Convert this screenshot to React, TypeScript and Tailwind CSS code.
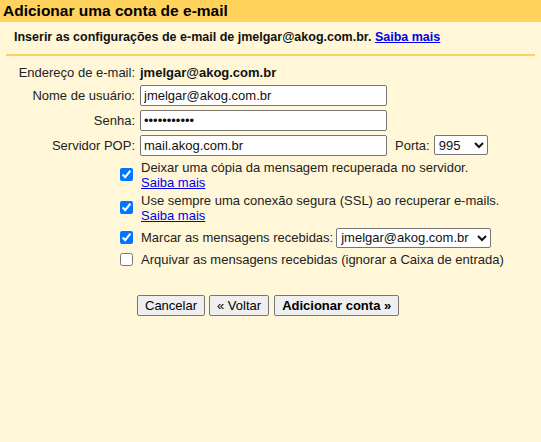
import React from "react";

const field =
  "h-[21px] w-[247px] rounded-[2px] border border-[#767676] bg-white px-[3px] text-[13px] text-[#111] outline-none";
const btn =
  "h-[21px] rounded-[2px] border border-[#767676] bg-[#efefef] px-[7px] text-[13px] text-black";

const App = () => {
  return (
    <div
      className="min-h-[442px] w-[541px] bg-[#fff7d8] text-[13px] text-[#222]"
      style={{ fontFamily: '"Liberation Sans", Arial, sans-serif' }}
    >
      <div className="flex h-[22px] items-center bg-[#ffd35c] pl-[3px]">
        <h1 className="text-[15.5px] font-bold text-black">
          Adicionar uma conta de e-mail
        </h1>
      </div>

      <div className="mx-[6px] border-b-2 border-[#fdd35e] pb-[7px] pl-[8px] pt-[6px]">
        <p className="text-[12.5px] font-bold text-[#111]">
          Inserir as configurações de e-mail de jmelgar@akog.com.br.{" "}
          <a href="#" className="text-[#0000ee] underline">
            Saiba mais
          </a>
        </p>
      </div>

      <div className="pt-[7px]">
        <div className="flex h-[20px] items-center">
          <span className="w-[135px] text-right">Endereço de e-mail:</span>
          <span className="ml-[5px] font-bold text-[#111]">jmelgar@akog.com.br</span>
        </div>
        <div className="mt-[2px] flex h-[21px] items-center">
          <label className="w-[135px] text-right">Nome de usuário:</label>
          <input className={`${field} ml-[5px]`} defaultValue="jmelgar@akog.com.br" />
        </div>
        <div className="mt-[4px] flex h-[21px] items-center">
          <label className="w-[135px] text-right">Senha:</label>
          <input
            type="password"
            className={`${field} ml-[5px] text-[11px]`}
            defaultValue="segredo1234"
          />
        </div>
        <div className="mt-[4px] flex h-[21px] items-center">
          <label className="w-[135px] text-right">Servidor POP:</label>
          <input className={`${field} ml-[5px]`} defaultValue="mail.akog.com.br" />
          <span className="ml-[8px]">Porta:</span>
          <select
            className="ml-[4px] h-[20px] w-[54px] rounded-[2px] border border-[#767676] bg-white text-[13px] text-[#111]"
            defaultValue="995"
          >
            <option>110</option>
            <option>995</option>
          </select>
        </div>
      </div>

      <div className="ml-[120px] mt-[4px] flex flex-col leading-[15px]">
        <div className="flex items-center">
          <input type="checkbox" defaultChecked className="h-[13px] w-[13px]" />
          <div className="ml-[8px]">
            <div>Deixar uma cópia da mensagem recuperada no servidor.</div>
            <a href="#" className="text-[#0000ee] underline">
              Saiba mais
            </a>
          </div>
        </div>
        <div className="mt-[3px] flex items-center">
          <input type="checkbox" defaultChecked className="h-[13px] w-[13px]" />
          <div className="ml-[8px]">
            <div>Use sempre uma conexão segura (SSL) ao recuperar e-mails.</div>
            <a href="#" className="text-[#0000ee] underline">
              Saiba mais
            </a>
          </div>
        </div>
        <div className="mt-[4px] flex h-[22px] items-center">
          <input type="checkbox" defaultChecked className="h-[13px] w-[13px]" />
          <span className="ml-[8px]">Marcar as mensagens recebidas:</span>
          <select
            className="ml-[3px] h-[20px] w-[155px] rounded-[2px] border border-[#767676] bg-white text-[13px] text-[#111]"
            defaultValue="a"
          >
            <option value="a">jmelgar@akog.com.br</option>
          </select>
        </div>
        <div className="mt-[3px] flex items-center">
          <input type="checkbox" className="h-[13px] w-[13px]" />
          <span className="ml-[8px]">
            Arquivar as mensagens recebidas (ignorar a Caixa de entrada)
          </span>
        </div>
      </div>

      <div className="ml-[137px] mt-[28px] flex gap-[4px]">
        <button type="button" className={btn}>
          Cancelar
        </button>
        <button type="button" className={btn}>
          « Voltar
        </button>
        <button type="button" className={`${btn} ml-[1px] font-bold`}>
          Adicionar conta »
        </button>
      </div>
    </div>
  );
};

export default App;
